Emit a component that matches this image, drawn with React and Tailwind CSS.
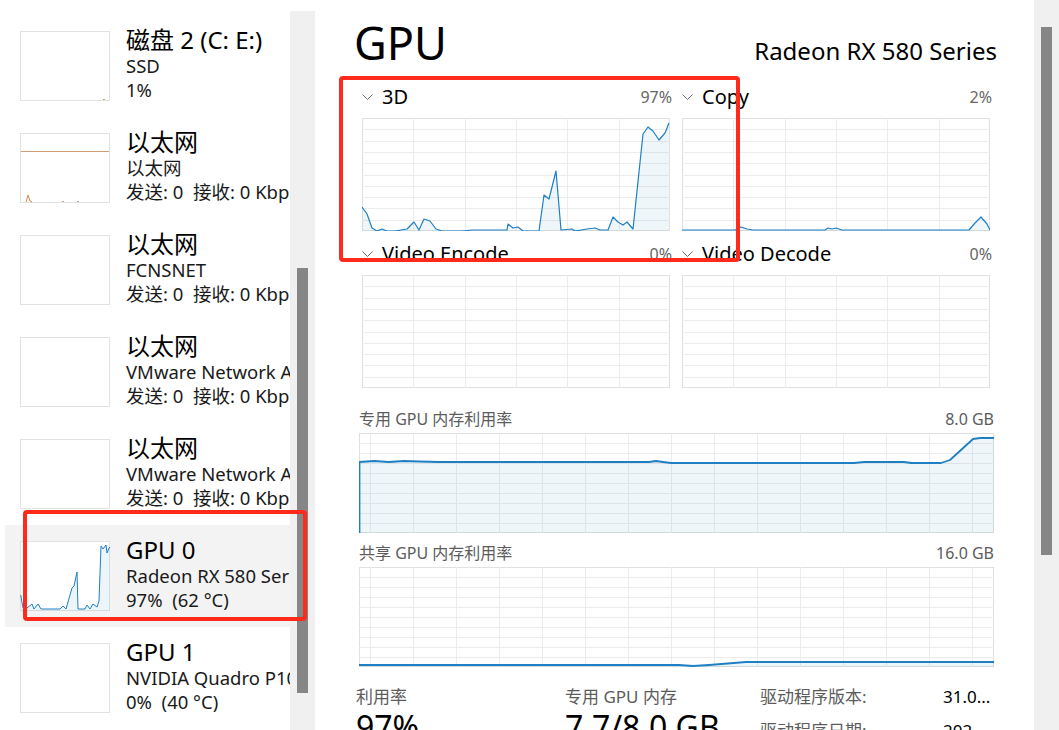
import React from 'react';

const BLUE = '#1f7fc4';
const FILL = 'rgba(17,125,187,0.07)';

const pts = (arr) => arr.map(([x, y]) => `${x},${y}`).join(' ');

const Chevron = () => (
  <svg width="11" height="7" viewBox="0 0 11 7" className="shrink-0">
    <polyline points="0.5,0.5 5.5,5.5 10.5,0.5" fill="none" stroke="#6b6b6b" strokeWidth="1" />
  </svg>
);

// chart with task-manager style grid
function GridChart({ w, h, cols, rows, colStart, colStep, data, lineWidth = 1.2, closeLeft = false }) {
  const vx = [];
  if (colStep) {
    for (let x = colStart; x < w - 1; x += colStep) vx.push(x);
  } else {
    for (let i = 1; i < cols; i++) vx.push(Math.round((w * i) / cols));
  }
  const hy = [];
  for (let i = 1; i < rows; i++) hy.push(Math.round((h * i) / rows));
  const last = data ? data[data.length - 1] : null;
  return (
    <svg width={w} height={h} viewBox={`0 0 ${w} ${h}`} className="block">
      <rect x="0.5" y="0.5" width={w - 1} height={h - 1} fill="white" stroke="#e0e0e0" />
      {vx.map((x) => (
        <line key={'v' + x} x1={x + 0.5} y1="0" x2={x + 0.5} y2={h} stroke="#ececec" />
      ))}
      {hy.map((y) => (
        <line key={'h' + y} x1="0" y1={y + 0.5} x2={w} y2={y + 0.5} stroke="#ececec" />
      ))}
      {data && (
        <>
          <polygon points={`${data[0][0]},${h} ${pts(data)} ${last[0]},${h}`} fill={FILL} />
          <polyline
            points={closeLeft ? `0.5,${h} ${pts(data)}` : pts(data)}
            fill="none"
            stroke={BLUE}
            strokeWidth={lineWidth}
            strokeLinejoin="round"
          />
        </>
      )}
    </svg>
  );
}

const data3d = [
  [0, 89], [5, 96], [10, 110], [15, 113], [20, 111], [25, 113], [33, 113], [45, 111], [52, 104], [57, 112],
  [62, 101], [68, 103], [74, 111], [80, 113], [100, 113], [110, 112], [135, 112], [145, 112], [146, 106],
  [151, 110], [156, 109], [161, 113], [177, 113], [182, 77], [187, 81], [194, 53], [199, 112], [210, 111],
  [213, 113], [225, 111], [233, 110], [238, 112], [246, 112], [251, 99], [256, 104], [261, 107], [265, 104],
  [271, 111], [281, 16], [286, 9], [291, 13], [297, 22], [303, 15], [307, 5],
];

const dataCopy = [
  [0, 112], [20, 112], [53, 112], [59, 109], [65, 111], [71, 112], [143, 112], [146, 110], [150, 111],
  [154, 110], [160, 112], [180, 112], [287, 112], [293, 105], [299, 99], [305, 106], [308, 112],
];

const dataDedicated = [
  [0.5, 29], [15, 28], [30, 29], [45, 28], [60, 28.5], [80, 29], [120, 29], [200, 29], [290, 29], [297, 28],
  [304, 29], [312, 30], [400, 30], [495, 30], [505, 29], [545, 29], [552, 30], [582, 30], [591, 27],
  [614, 6], [621, 5], [635, 5],
];

const dataShared = [
  [0, 98], [150, 98], [320, 98], [334, 99], [350, 98], [387, 95], [635, 95],
];

const gpu0Spark = [
  [0.7, 54], [3, 67], [7, 67], [12, 63], [14, 68], [18, 63], [21, 68], [40, 68], [43, 65], [46, 68], [52, 47],
  [54, 45], [57, 31], [58, 68], [65, 68], [67, 64], [70, 68], [73, 63], [77, 66], [79, 60], [81, 5], [83, 8],
  [86, 4], [87, 12], [89, 7], [90, 6],
];

function Thumb({ kind }) {
  return (
    <svg width="90" height="70" viewBox="0 0 90 70" className="block shrink-0">
      <rect x="0.5" y="0.5" width="89" height="69" fill="white" stroke="#e2e2e2" />
      {kind === 'disk' && <rect x="83" y="68" width="2" height="1" fill="#8bbf6a" />}
      {kind === 'eth' && (
        <>
          <line x1="1" y1="18.5" x2="89" y2="18.5" stroke="#d29d76" strokeWidth="1" />
          <polyline points="6,69 8,62 10,68 12,69" fill="none" stroke="#d08a55" strokeWidth="1" />
          <rect x="42" y="68" width="2" height="1" fill="#c9a283" />
          <rect x="57" y="68" width="2" height="1" fill="#c9a283" />
        </>
      )}
      {kind === 'gpu' && (
        <>
          <polygon points={`0.7,70 ${pts(gpu0Spark)} 90,70`} fill="rgba(17,125,187,0.08)" />
          <polyline points={pts(gpu0Spark)} fill="none" stroke={BLUE} strokeWidth="1" />
        </>
      )}
    </svg>
  );
}

const items = [
  { title: '磁盘 2 (C: E:)', sub: 'SSD', val: '1%', kind: 'disk' },
  { title: '以太网', sub: '以太网', val: '发送: 0  接收: 0 Kbps', kind: 'eth' },
  { title: '以太网', sub: 'FCNSNET', val: '发送: 0  接收: 0 Kbps' },
  { title: '以太网', sub: 'VMware Network Adapter VMnet1', val: '发送: 0  接收: 0 Kbps' },
  { title: '以太网', sub: 'VMware Network Adapter VMnet8', val: '发送: 0  接收: 0 Kbps' },
  { title: 'GPU 0', sub: 'Radeon RX 580 Series', val: '97%  (62 °C)', kind: 'gpu', selected: true },
  { title: 'GPU 1', sub: 'NVIDIA Quadro P1000', val: '0%  (40 °C)' },
];

function SideItem({ item }) {
  return (
    <div
      className={`ml-[5px] h-[102px] flex items-center pl-[15px] gap-[16px] ${item.selected ? 'bg-[#f3f3f3]' : ''}`}
    >
      <Thumb kind={item.kind} />
      <div className="min-w-0 whitespace-pre text-black pb-[4px]">
        <div className="text-[24px] leading-[28px]">{item.title}</div>
        <div className="text-[18.5px] leading-[24px] text-[#1a1a1a]">{item.sub}</div>
        <div className="text-[18.5px] leading-[24px] text-[#1a1a1a]">{item.val}</div>
      </div>
    </div>
  );
}

function EngineCell({ name, pct, data }) {
  return (
    <div className="flex flex-col">
      <div className="h-[28px] flex items-center">
        <Chevron />
        <span className="ml-[9px] text-[20px] text-black">{name}</span>
        <span className="ml-auto text-[16px] text-[#666]">{pct}</span>
      </div>
      <div className="mt-[7px]">
        <GridChart w={308} h={113} cols={6} rows={10} data={data} />
      </div>
    </div>
  );
}

export default function App() {
  return (
    <div className="relative w-[1059px] h-[730px] overflow-hidden bg-white flex font-['Noto_Sans','Noto_Sans_CJK_SC',sans-serif]">
      {/* sidebar */}
      <div className="w-[290px] shrink-0 overflow-hidden pt-[15px]">
        {items.map((it, i) => (
          <SideItem key={i} item={it} />
        ))}
      </div>
      <div className="w-[25px] shrink-0 mt-[11px] bg-[#f0f0f0]">
        <div className="ml-[7px] mt-[257px] w-[11px] h-[425px] bg-[#868686]" />
      </div>

      {/* main */}
      <div className="flex-1 min-w-0 flex flex-col pl-[40px] pr-[40px] pt-[17px]">
        <div className="flex items-baseline justify-between">
          <div className="text-[45px] leading-[52px] text-black -ml-[1px]">GPU</div>
          <div className="text-[24px] -mr-[3px] text-black">Radeon RX 580 Series</div>
        </div>

        <div className="mt-[14px] pl-[7px] grid grid-cols-[310px_310px] gap-x-[10px] gap-y-[9px]">
          <EngineCell name="3D" pct="97%" data={data3d} />
          <EngineCell name="Copy" pct="2%" data={dataCopy} />
          <EngineCell name="Video Encode" pct="0%" />
          <EngineCell name="Video Decode" pct="0%" />
        </div>

        <div className="mt-[16px] pl-[4px] flex flex-col">
          <div className="h-[29px] flex items-center justify-between text-[16px] text-[#5c5c5c]">
            <span>专用 GPU 内存利用率</span>
            <span>8.0 GB</span>
          </div>
          <GridChart w={635} h={100} rows={10} colStart={11} colStep={43} data={dataDedicated} lineWidth={1.8} closeLeft />
          <div className="mt-[5px] h-[29px] flex items-center justify-between text-[16px] text-[#5c5c5c]">
            <span>共享 GPU 内存利用率</span>
            <span>16.0 GB</span>
          </div>
          <GridChart w={635} h={100} rows={10} colStart={11} colStep={43} data={dataShared} lineWidth={1.8} />
        </div>

        <div className="mt-[19px] ml-[1px] flex">
          <div className="w-[209px] shrink-0">
            <div className="text-[17px] leading-[21px] text-[#5c5c5c]">利用率</div>
            <div className="text-[32px] leading-[40px] text-black">97%</div>
          </div>
          <div className="w-[195px] shrink-0">
            <div className="text-[17px] leading-[21px] text-[#5c5c5c]">专用 GPU 内存</div>
            <div className="text-[32px] leading-[40px] text-black whitespace-nowrap">7.7/8.0 GB</div>
          </div>
          <div className="grid grid-cols-[183px_auto] gap-y-[6px] text-[17px] leading-[22px]">
            <span className="text-[#5c5c5c]">驱动程序版本:</span>
            <span className="text-black">31.0...</span>
            <span className="text-[#5c5c5c]">驱动程序日期:</span>
            <span className="text-black">202</span>
          </div>
        </div>
      </div>

      <div className="w-[25px] shrink-0 bg-[#f0f0f0]">
        <div className="ml-[7px] mt-[27px] w-[11px] h-[528px] bg-[#868686]" />
      </div>

      {/* annotation boxes */}
      <div className="absolute left-[339px] top-[76px] w-[401px] h-[186px] border-4 border-[#fe2a1c] rounded-[4px]" />
      <div className="absolute left-[23px] top-[510px] w-[284px] h-[111px] border-4 border-[#fe2a1c] rounded-[4px]" />
    </div>
  );
}
